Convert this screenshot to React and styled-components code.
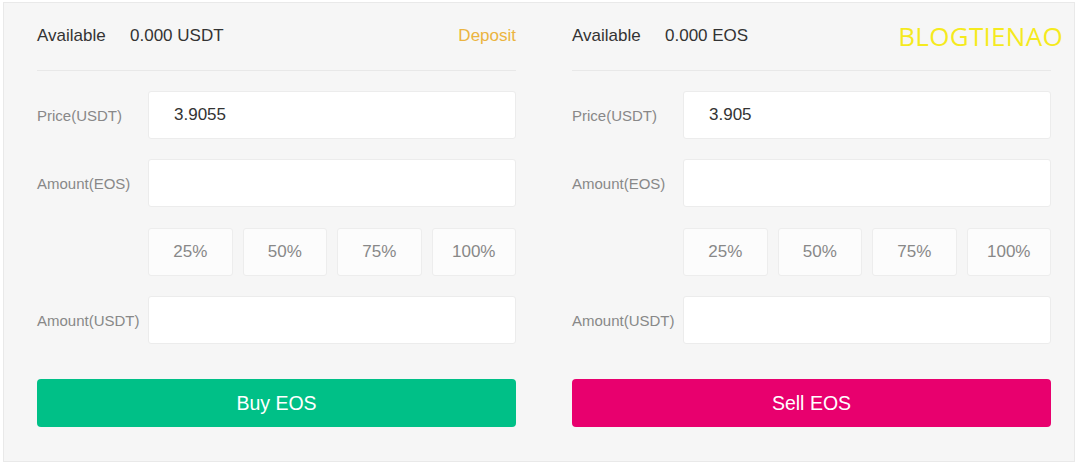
import React from "react";
import styled, { createGlobalStyle } from "styled-components";

const Global = createGlobalStyle`
  html, body {
    margin: 0;
    background: #ffffff;
  }
  body {
    padding: 2px 5px 0 3px;
    font-family: "Liberation Sans", Arial, sans-serif;
  }
`;

const Panel = styled.div`
  width: 1072px;
  height: 460px;
  box-sizing: border-box;
  border: 1px solid #e9e9e9;
  background: #f6f6f6;
  display: grid;
  grid-template-columns: 479px 479px;
  column-gap: 56px;
  padding-left: 33px;
`;

const Column = styled.div`
  display: flex;
  flex-direction: column;
  position: relative;
`;

const Header = styled.div`
  height: 65px;
  display: flex;
  align-items: center;
  font-size: 17px;
  color: #333333;
  position: relative;
`;

const HeaderLabel = styled.span`
  width: 93px;
`;

const HeaderValue = styled.span`
  flex: 1;
`;

const DepositLink = styled.a`
  color: #ebb440;
  text-decoration: none;
  cursor: pointer;
`;

const Watermark = styled.span`
  position: absolute;
  right: -12px;
  top: 50%;
  transform: translateY(-50%);
  font-family: "Open Sans", sans-serif;
  font-weight: 400;
  font-size: 26px;
  letter-spacing: 0.3px;
  color: #f5ea1e;
  pointer-events: none;
`;

const Divider = styled.div`
  height: 1px;
  background: #e8e8e8;
  margin: 2px 0 20px;
`;

const Rows = styled.div`
  display: flex;
  flex-direction: column;
  gap: 20px;
`;

const Row = styled.div`
  display: grid;
  grid-template-columns: 111px 1fr;
  align-items: center;
  height: 48px;
  margin-top: ${(p) => (p.$nudge ? "1px" : "0")};
`;

const Label = styled.span`
  font-size: 15px;
  color: #888888;
  white-space: nowrap;
`;

const Field = styled.div`
  height: 48px;
  box-sizing: border-box;
  background: #ffffff;
  border: 1px solid #ececec;
  border-radius: 3px;
  display: flex;
  align-items: center;
  padding-left: 25px;
  font-size: 17px;
  color: #333333;
`;

const PercentGroup = styled.div`
  display: grid;
  grid-template-columns: repeat(4, 1fr);
  gap: 10px;
`;

const PercentButton = styled.button`
  height: 48px;
  box-sizing: border-box;
  background: #fcfcfc;
  border: 1px solid #ededed;
  border-radius: 3px;
  font-family: "Liberation Sans", Arial, sans-serif;
  font-size: 17px;
  color: #888888;
  padding: 0;
  cursor: pointer;
`;

const SubmitButton = styled.button`
  margin-top: 35px;
  height: 48px;
  width: 100%;
  border: none;
  border-radius: 4px;
  background: ${(p) => (p.$side === "buy" ? "#00c087" : "#e8006e")};
  color: #ffffff;
  font-family: "Liberation Sans", Arial, sans-serif;
  font-size: 19.5px;
  cursor: pointer;
`;

function TradeForm({ side, balance, asset, price, children }) {
  return (
    <Column>
      <Header>
        <HeaderLabel>Available</HeaderLabel>
        <HeaderValue>{balance}</HeaderValue>
        {children}
      </Header>
      <Divider />
      <Rows>
        <Row>
          <Label>Price(USDT)</Label>
          <Field>{price}</Field>
        </Row>
        <Row>
          <Label>Amount(EOS)</Label>
          <Field />
        </Row>
        <Row $nudge>
          <span />
          <PercentGroup>
            {["25%", "50%", "75%", "100%"].map((p) => (
              <PercentButton key={p}>{p}</PercentButton>
            ))}
          </PercentGroup>
        </Row>
        <Row>
          <Label>Amount(USDT)</Label>
          <Field />
        </Row>
      </Rows>
      <SubmitButton $side={side}>
        {side === "buy" ? "Buy" : "Sell"} {asset}
      </SubmitButton>
    </Column>
  );
}

export default function App() {
  return (
    <>
      <Global />
      <Panel>
        <TradeForm side="buy" balance="0.000 USDT" asset="EOS" price="3.9055">
          <DepositLink>Deposit</DepositLink>
        </TradeForm>
        <TradeForm side="sell" balance="0.000 EOS" asset="EOS" price="3.905">
          <Watermark>BLOGTIENAO</Watermark>
        </TradeForm>
      </Panel>
    </>
  );
}
